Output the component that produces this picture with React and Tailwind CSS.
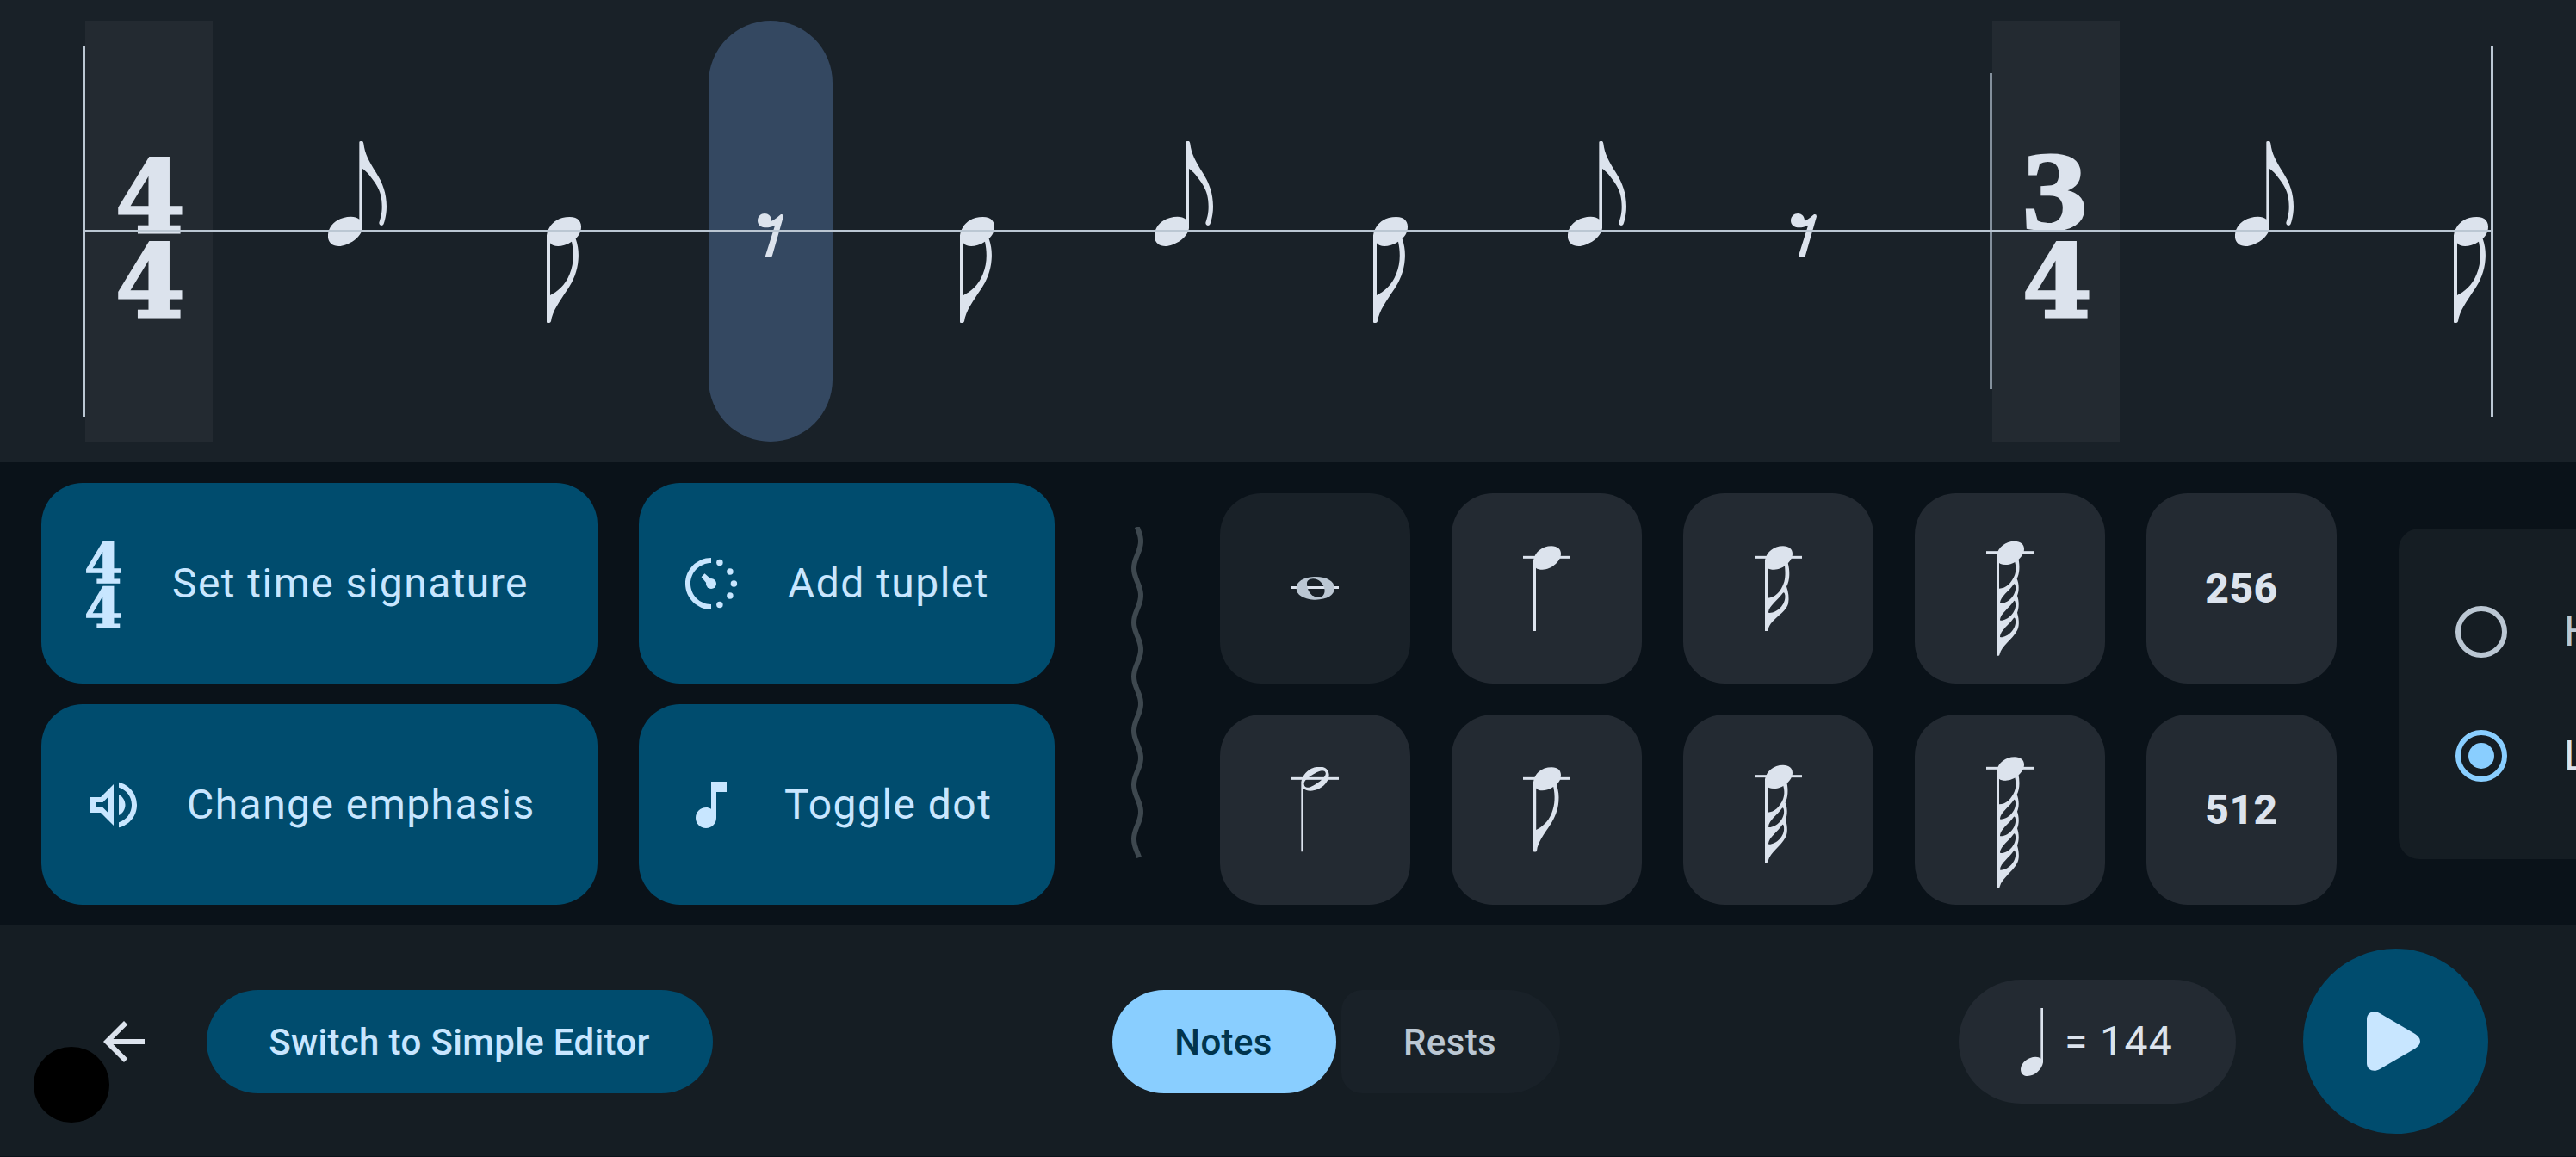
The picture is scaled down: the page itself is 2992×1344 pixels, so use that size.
const INK = "#dce3ed";

function UpEighth() {
  return (
    <svg className="h-[122px] w-[68px] shrink-0" viewBox="0 0 204 366" fill={INK}>
      <path d="M0 326C2 290 37 263 80 263C92 263 102 266 109 272V4Q109 0 114 0H119Q123 1 124 8C128 43 143 71 168 110C190 145 204 181 204 228C204 253 199 273 194 288C191 296 180 296 178 286C178 278 188 264 188 228C188 198 182 173 167 150C152 126 132 103 120 96V303C118 320 107 333 92 345C72 359 52 366 38 366C14 366 -2 352 0 326Z" />
    </svg>
  );
}

const DOWN_EIGHTH =
  "M0 64C5 29 33 0 80 0C107 0 120 14 120 34C120 52 113 64 101 76C110 104 112 124 110 149C107 189 93 222 73 252C47 291 19 329 15 364Q13 369 9 369H3Q0 369 0 365ZM12 91V273C35 262 65 239 80 199C95 162 95 124 87 86C70 97 53 102 39 102C27 102 17 99 12 91Z";

function DownEighth() {
  return (
    <svg className="h-[123px] w-10 shrink-0" viewBox="0 0 120 369" fill={INK} fillRule="evenodd">
      <path d={DOWN_EIGHTH} />
    </svg>
  );
}

function EighthRest() {
  return (
    <svg className="h-[51px] w-[30px] shrink-0" viewBox="0 0 91 154" fill={INK}>
      <path d="M49 26C61 22 74 9 82 3Q91 1 91 10L51 150Q49 154 39 154Q27 154 27 150L61 41C49 47 36 50 24 49C11 49 0 39 0 25C0 11 11 0 25 0C38 0 48 9 49 26Z" />
    </svg>
  );
}

const HEAD = "M36 10C42 -18 66 -39 99 -39C120 -39 132 -28 132 -12C132 15 98 43 68 43C58 43 49 41 45 37L36 37Z";

function manyFlags(n) {
  let d = "M36 10H45L112 20C118 50 116 75 107 92";
  let y = 92;
  for (let k = 1; k < n; k++) {
    d += `C115 ${y + 20} 115 ${y + 42} 108 ${y + 59}`;
    y += 59;
  }
  d += `C116 ${y + 28} 115 ${y + 50} 107 ${y + 63}C92 ${y + 92} 54 ${y + 115} 47 ${y + 144}Q46 ${y + 150} 43 ${y + 150}H36Z`;
  d += "M45 36V126C70 126 88 106 99 80C106 60 103 45 99 30C80 44 60 44 45 36Z";
  for (let k = 0; k < n; k++) {
    const o = 59 * k;
    d += `M48 ${175 + o}C50 ${154 + o} 80 ${134 + o} 95 ${112 + o}Q100 ${105 + o} 102 ${118 + o}C106 ${150 + o} 75 ${178 + o} 51 ${178 + o}Q47 ${178 + o} 48 ${175 + o}Z`;
  }
  return d;
}

const SIXTEENTH =
  "M36 10H45L116 20C123 45 124 80 111 102C118 122 121 142 117 162C108 195 56 216 48 250Q47 257 44 257H36ZM45 36V142C70 142 92 120 103 86C109 62 106 44 105 28C80 44 60 44 45 36ZM48 191C50 170 80 150 98 125Q104 119 106 132C110 165 78 194 52 194Q47 194 48 191Z";

function TileNote({ flags, top, bottom, className }) {
  return (
    <svg className={className} viewBox={`0 ${top} 165 ${bottom - top}`} fill={INK} fillRule="evenodd">
      <rect x="0" y="-4.5" width="165" height="9" />
      {flags === -1 && (
        <path d="M34 12C40 -18 66 -41 99 -41C120 -41 131 -28 131 -12C131 15 100 43 66 43C58 43 46 40 42 35V255H34ZM44 20C46 36 62 34 84 20C108 6 122 -10 119 -20C115 -32 98 -28 80 -17C60 -5 42 8 44 20Z" />
      )}
      {flags === 0 && <path d={HEAD + "M36 30H45V257H36Z"} fillRule="nonzero" />}
      {flags === 1 && <path d={DOWN_EIGHTH} transform="translate(36 -39.6) scale(.8)" />}
      {flags === 2 && <path d={SIXTEENTH} />}
      {flags > 2 && <path d={manyFlags(flags - 1)} />}
      {flags > 1 && <path d={HEAD} />}
    </svg>
  );
}

function WholeNote() {
  return (
    <svg className="h-[27px] w-[55px]" viewBox="0 0 165 81">
      <rect x="0" y="33" width="165" height="9" fill={INK} />
      <path
        fill="#bbc7d3"
        fillRule="evenodd"
        d="M84 0C124 0 150 16 150 40C150 64 124 80 84 80C44 80 17 64 17 40C17 16 44 0 84 0ZM54 26C56 50 70 72 95 72C112 71 118 56 115 42C111 22 94 6 75 7C60 8 53 15 54 26Z"
      />
    </svg>
  );
}

function Slot({ children, className = "" }) {
  return <div className={`flex h-full w-36 shrink-0 items-start justify-center ${className}`}>{children}</div>;
}
const Up = () => <Slot className="pt-[140px]"><UpEighth /></Slot>;
const Down = ({ className = "" }) => <Slot className={`pt-[228px] ${className}`}><DownEighth /></Slot>;
const Rest = ({ className = "" }) => <Slot className={`pt-[224px] ${className}`}><EighthRest /></Slot>;

function Four() {
  return (
    <span className="block w-[84px] font-['DejaVu_Serif',serif] text-[116px] leading-[98px] font-bold [-webkit-text-stroke:3px_#dce3ed]">4</span>
  );
}

function Staff() {
  return (
    <section className="relative flex h-[537px] items-start bg-[#192128] pt-6 pl-24 text-[#dce3ed]">
      <div className="mt-[30px] h-[430px] w-[3px] shrink-0 bg-[#bbc7d3]" />
      <div className="flex h-[489px] w-[148px] shrink-0 flex-col bg-[#232a31] pt-[156px] pl-[35px]">
        <Four />
        <Four />
      </div>
      <div className="ml-24 flex h-[489px] shrink-0 gap-24">
        <Up />
        <Down />
        <Rest className="rounded-full bg-[#344861]" />
        <Down />
        <Up />
        <Down />
        <Up />
        <Rest />
      </div>
      <div className="mt-[61px] ml-36 h-[367px] w-[3px] shrink-0 bg-[#84909c]" />
      <div className="flex h-[489px] w-[148px] shrink-0 flex-col bg-[#232a31] pt-[156px] pl-[35px]">
        <span className="-mt-[7px] mb-[7px] block w-[72px] origin-left scale-x-[1.16] font-['Liberation_Serif',serif] text-[130px] leading-[98px] font-bold [-webkit-text-stroke:3px_#dce3ed]">3</span>
        <Four />
      </div>
      <div className="ml-24 flex h-[489px] shrink-0 gap-24">
        <Up />
        <Down className="-mr-[49px]" />
      </div>
      <div className="mt-[30px] h-[430px] w-[3px] shrink-0 bg-[#bbc7d3]" />
      <div className="absolute top-[267px] left-[99px] h-[3px] w-[2796px] bg-[#bbc7d3]" />
    </section>
  );
}

function ActionButton({ icon, label }) {
  return (
    <button className="flex items-center rounded-[48px] bg-[#004c6e] pl-12 text-[48px] leading-[56px] tracking-[1.45px] whitespace-nowrap text-[#c8e6ff]">
      {icon}
      {label}
    </button>
  );
}

const VolumeIcon = (
  <svg className="size-[72px] shrink-0" viewBox="0 0 24 24" fill="currentColor">
    <path d="M3 9v6h4l5 5V4L7 9H3zm7-.17v6.34L7.83 13H5v-2h2.83L10 8.83zM16.5 12c0-1.77-1.02-3.29-2.5-4.03v8.05c1.48-.73 2.5-2.25 2.5-4.02zM14 3.23v2.06c2.89.86 5 3.54 5 6.71s-2.11 5.85-5 6.71v2.06c4.01-.91 7-4.49 7-8.77s-2.99-7.86-7-8.77z" />
  </svg>
);
const TupletIcon = (
  <svg className="size-[72px] shrink-0" viewBox="0 0 24 24" fill="currentColor">
    <path d="M12 2C6.5 2 2 6.5 2 12s4.500 10 10 10v-2c-4.400 0-8-3.600-8-8s3.600-8 8-8z" />
    <circle cx="15.3" cy="3.8" r="1.25" />
    <circle cx="19.3" cy="7.3" r="1.25" />
    <circle cx="20.8" cy="12" r="1.25" />
    <circle cx="19.3" cy="16.7" r="1.25" />
    <circle cx="15.3" cy="20.2" r="1.25" />
    <circle cx="12" cy="12" r="2" />
    <path d="M9.500 8.100 8.200 9.400l2.400 2.900 1.700-1.700z" />
  </svg>
);
const MusicIcon = (
  <svg className="size-[72px] shrink-0" viewBox="0 0 24 24" fill="currentColor">
    <path d="M12 3v10.550c-.59-.34-1.270-.55-2-.55-2.210 0-4 1.790-4 4s1.790 4 4 4 4-1.790 4-4V7h4V3h-6z" />
  </svg>
);
const TimeSigIcon = (
  <span className="flex w-12 shrink-0 flex-col pt-[7px] pl-0.5 font-['DejaVu_Serif',serif] text-[63px] leading-[52px] font-bold [-webkit-text-stroke:1.5px_#c8e6ff]">
    <span>4</span>
    <span>4</span>
  </span>
);

const wave = Array.from({ length: 129 }, (_, i) => {
  const y = i * 3;
  return `${(7 + 4 * Math.sin((2 * Math.PI * (y - 1)) / 62.9)).toFixed(2)},${y}`;
}).join(" ");

function Tile({ children, dim }) {
  return (
    <button className={`flex w-[221px] items-center justify-center rounded-[48px] text-[48px] font-extrabold tracking-[0.5px] text-[#dce3ed] ${dim ? "bg-[#192128]" : "bg-[#232a32]"}`}>
      {children}
    </button>
  );
}

function Radio({ checked, label }) {
  return (
    <div className="flex h-36 items-center pl-[66px]">
      <span className={`flex size-[60px] shrink-0 items-center justify-center rounded-full border-[6px] ${checked ? "border-[#89ceff]" : "border-[#bbc7d3]"}`}>
        {checked && <span className="size-[30px] rounded-full bg-[#89ceff]" />}
      </span>
      <span className={`ml-[66px] text-[48px] leading-[56px] ${checked ? "text-[#dce3ed]" : "text-[#bbc7d3]"}`}>{label}</span>
    </div>
  );
}

function Tools() {
  return (
    <section className="flex h-[538px] overflow-hidden bg-[#0a1219] pl-12">
      <div className="grid shrink-0 grid-cols-[646px_483px] grid-rows-2 gap-x-12 gap-y-6 py-6">
        <ActionButton icon={TimeSigIcon} label={<span className="ml-[56px]">Set time signature</span>} />
        <ActionButton icon={TupletIcon} label={<span className="ml-[53px]">Add tuplet</span>} />
        <ActionButton icon={VolumeIcon} label={<span className="ml-[49px]">Change emphasis</span>} />
        <ActionButton icon={MusicIcon} label={<span className="ml-[49px]">Toggle dot</span>} />
      </div>
      <svg className="mt-[75px] ml-[89px] h-[385px] w-[14px] shrink-0" viewBox="0 0 14 385" fill="none">
        <polyline points={wave} stroke="#3e484f" strokeWidth="6" />
      </svg>
      <div className="ml-[89px] grid shrink-0 grid-flow-col grid-rows-2 gap-x-12 gap-y-9 pt-9 pb-6">
        <Tile dim><WholeNote /></Tile>
        <Tile><TileNote flags={-1} top={-40} bottom={257} className="h-[99px] w-[55px]" /></Tile>
        <Tile><TileNote flags={0} top={-40} bottom={257} className="h-[99px] w-[55px]" /></Tile>
        <Tile><TileNote flags={1} top={-40} bottom={257} className="h-[99px] w-[55px]" /></Tile>
        <Tile><TileNote flags={2} top={-40} bottom={257} className="h-[99px] w-[55px]" /></Tile>
        <Tile><TileNote flags={3} top={-71} bottom={304} className="h-[125px] w-[55px]" /></Tile>
        <Tile><TileNote flags={4} top={-107} bottom={361} className="h-[156px] w-[55px]" /></Tile>
        <Tile><TileNote flags={5} top={-130} bottom={422} className="h-[184px] w-[55px]" /></Tile>
        <Tile>256</Tile>
        <Tile>512</Tile>
      </div>
      <div className="mt-[77px] ml-[72px] flex h-[384px] w-[600px] shrink-0 flex-col justify-center rounded-[24px] bg-[#151d23]">
        <Radio label="H" />
        <Radio checked label="L" />
      </div>
    </section>
  );
}

function BottomBar() {
  return (
    <footer className="relative flex h-[268px] items-center bg-[#151d23] pl-[108px] text-[42px] font-medium">
      <svg className="mt-[2px] size-[72px] shrink-0" viewBox="0 0 24 24" fill={INK}>
        <path d="M20 11H7.830l5.590-5.590L12 4l-8 8 8 8 1.410-1.410L7.830 13H20v-2z" />
      </svg>
      <button className="mt-[2px] ml-[60px] flex h-[120px] w-[588px] shrink-0 items-center justify-center rounded-full bg-[#004c6e] pr-px tracking-[0.35px] whitespace-nowrap text-[#c8e6ff]">
        Switch to Simple Editor
      </button>
      <div className="mt-[2px] ml-[464px] flex shrink-0 gap-[6px] tracking-[0.35px]">
        <button className="h-[120px] w-[260px] rounded-full bg-[#89ceff] pr-[2px] text-[#00344d]">Notes</button>
        <button className="h-[120px] w-[254px] rounded-l-[24px] rounded-r-[60px] bg-[#192128] pr-[2px] text-[#bbc7d3]">Rests</button>
      </div>
      <div className="mt-[2px] ml-[463px] flex h-36 w-[322px] shrink-0 items-center rounded-full bg-[#232a32] pl-[72px] text-[48px] font-normal tracking-[1.4px] whitespace-nowrap text-[#dce3ed]">
        <svg className="h-[79px] w-[26px] shrink-0" viewBox="0 0 78 237" fill={INK}>
          <path d="M70 0H78V190C74 215 48 237 24 237C8 237 0 227 0 212C2 190 26 170 52 170C60 170 66 172 70 176Z" />
        </svg>
        <span className="ml-[25px]">= 144</span>
      </div>
      <button className="ml-[78px] flex size-[215px] shrink-0 items-center rounded-full bg-[#004c6e] pl-[74px]">
        <svg className="h-[69px] w-[62px]" viewBox="0 0 62 69" fill="#c8e6ff">
          <path d="M0 9C0 1 8 -2 15 2L56 26Q62 30 62 34.500Q62 39 56 43L15 67C8 71 0 68 0 60Z" />
        </svg>
      </button>
      <div className="absolute top-[141px] left-[39px] size-[88px] rounded-full bg-black" />
    </footer>
  );
}

export default function App() {
  return (
    <main className="h-[1344px] w-[2992px] overflow-hidden bg-[#0a1219] font-[Roboto,sans-serif]">
      <Staff />
      <Tools />
      <BottomBar />
    </main>
  );
}
